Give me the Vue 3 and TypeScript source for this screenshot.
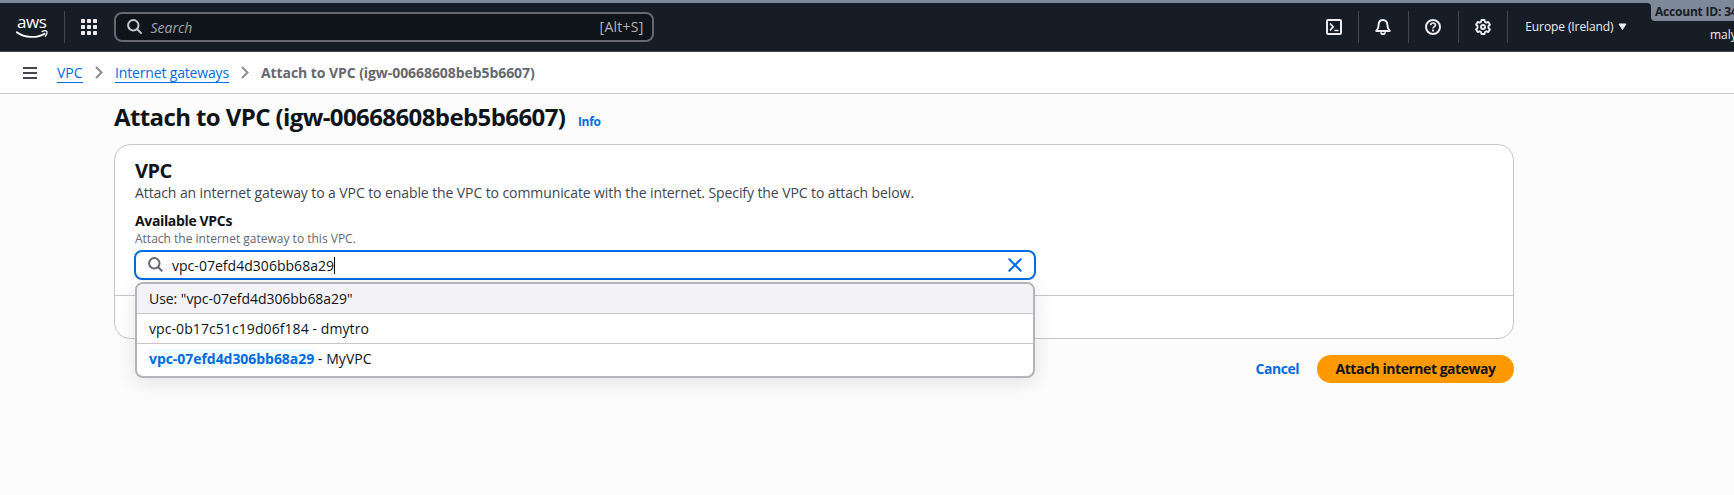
<script setup lang="ts">
import { ref } from 'vue'

interface Option {
  match: string
  rest: string
}

const gatewayId = 'igw-00668608beb5b6607'
const query = ref('vpc-07efd4d306bb68a29')
const options: Option[] = [
  { match: '', rest: 'vpc-0b17c51c19d06f184 - dmytro' },
  { match: 'vpc-07efd4d306bb68a29', rest: ' - MyVPC' },
]
const cells = [0, 6, 12]
</script>

<template>
  <div class="page">
    <div class="strip"></div>
    <header class="topbar">
      <div class="logo">
        <span class="logo-text">aws</span>
        <svg class="swoosh" width="33" height="9" viewBox="0 0 33 9">
          <path d="M.8 2.2C8.500 8 21 8.500 28.600 3.700" fill="none" stroke="#fff" stroke-width="1.800" stroke-linecap="round" />
          <path d="M26 1.600c2-.9 4.300-.9 4.800-.2.500.8-.2 3.100-1.600 4.900" fill="none" stroke="#fff" stroke-width="1.200" stroke-linecap="round" />
        </svg>
      </div>
      <i class="sep"></i>
      <svg class="apps" width="16" height="16" viewBox="0 0 16 16">
        <template v-for="y in cells" :key="y">
          <rect v-for="x in cells" :key="x" :x="x" :y="y" width="4" height="4" rx=".7" fill="#ebebf0" />
        </template>
      </svg>
      <div class="search">
        <svg width="16" height="16" viewBox="0 0 16 16" fill="none" stroke="#c6c6cd" stroke-width="2">
          <circle cx="6.300" cy="6.300" r="5.200" /><path d="m10 10 4.600 4.600" />
        </svg>
        <span class="ph">Search</span>
        <span class="key">[Alt+S]</span>
      </div>
      <nav class="tools">
        <div class="tool">
          <svg width="16" height="16" viewBox="0 0 16 16" fill="none" stroke="#ebebf0" stroke-width="2" stroke-linejoin="round">
            <rect x="1" y="1" width="14" height="14" rx="1" /><path d="m4 4.500 3.200 3.400L4 11.300M8.500 11.500h4" stroke-width="1.700" />
          </svg>
        </div>
        <div class="tool">
          <svg width="16" height="16" viewBox="0 0 16 16" fill="none" stroke="#ebebf0" stroke-width="2" stroke-linejoin="round">
            <path d="M8 1C5.200 1 3.700 3 3.700 5.600c0 3-.8 4.700-2.400 6.400h13.400c-1.600-1.700-2.400-3.400-2.400-6.400C12.300 3 10.800 1 8 1Z" /><path d="M6 13.200a2 2 0 0 0 4 0" />
          </svg>
        </div>
        <div class="tool">
          <svg width="16" height="16" viewBox="0 0 16 16" fill="none" stroke="#ebebf0" stroke-width="2">
            <circle cx="8" cy="8" r="7" /><path d="M5.700 6.300C5.700 4.800 6.700 4 8 4s2.400.8 2.400 2.100C10.400 7.700 8 7.700 8 9.600" stroke-width="1.700" /><path d="M8 10.600v1.800" stroke-width="1.800" />
          </svg>
        </div>
        <div class="tool">
          <svg width="16" height="16" viewBox="0 0 16 16" fill="none" stroke="#ebebf0" stroke-width="1.900" stroke-linejoin="round">
            <path d="M6.500 1h3l.5 2 1.300.7 2-.7 1.600 2.500L13.500 7v2l1.400 1.500-1.600 2.500-2-.7-1.300.7-.5 2h-3L6 13l-1.300-.7-2 .7-1.600-2.500L2.500 9V7L1.100 5.500 2.700 3l2 .7L6 3Z" /><circle cx="8" cy="8" r="2" />
          </svg>
        </div>
      </nav>
      <div class="region">
        <span>Europe (Ireland)</span>
        <svg width="9" height="8" viewBox="0 0 9 8"><path d="M1 1h7L4.500 6.500Z" fill="#ebebf0" stroke="#ebebf0" stroke-linejoin="round" /></svg>
      </div>
      <div class="account">
        <div class="account-id"><svg class="notch" width="4" height="4" viewBox="0 0 4 4"><path d="M0 0h4v4a4 4 0 0 0-4-4Z" fill="#7d8998" /></svg>Account ID: 34</div>
        <div class="user">maly</div>
      </div>
    </header>

    <nav class="crumbs">
      <svg width="14" height="12" viewBox="0 0 14 12"><path d="M0 1h14M0 6h14M0 11h14" stroke="#424650" stroke-width="2" /></svg>
      <a class="crumb-vpc">VPC</a>
      <svg class="chev" width="8" height="13" viewBox="0 0 8 13"><path d="m1 1 5.500 5.500L1 12" fill="none" stroke="#8c8c94" stroke-width="2" /></svg>
      <a class="crumb-gw">Internet gateways</a>
      <svg class="chev" width="8" height="13" viewBox="0 0 8 13"><path d="m1 1 5.500 5.500L1 12" fill="none" stroke="#8c8c94" stroke-width="2" /></svg>
      <span class="current">Attach to VPC ({{ gatewayId }})</span>
    </nav>

    <main>
      <div class="title">
        <h1>Attach to VPC ({{ gatewayId }})</h1>
        <a class="info">Info</a>
      </div>
      <section class="card">
        <div class="body">
          <h2>VPC</h2>
          <p class="desc">Attach an internet gateway to a VPC to enable the VPC to communicate with the internet. Specify the VPC to attach below.</p>
          <div class="label">Available VPCs</div>
          <div class="hint">Attach the internet gateway to this VPC.</div>
          <div class="field">
            <div class="input">
              <svg width="16" height="16" viewBox="0 0 16 16" fill="none" stroke="#656871" stroke-width="2">
                <circle cx="6.300" cy="6.300" r="5.200" /><path d="m10 10 4.300 4.300" />
              </svg>
              <span class="value">{{ query }}</span><i class="caret"></i>
              <svg class="clear" width="14" height="14" viewBox="0 0 14 14"><path d="m1.300 1.300 11.400 11.400m0-11.400L1.300 12.700" stroke="#006ce0" stroke-width="2" stroke-linecap="round" /></svg>
            </div>
            <ul class="menu-list">
              <li class="use">Use: "{{ query }}"</li>
              <li v-for="o in options" :key="o.rest"><mark v-if="o.match">{{ o.match }}</mark><span class="rest">{{ o.rest }}</span></li>
            </ul>
          </div>
        </div>
      </section>
      <div class="actions">
        <button class="cancel">Cancel</button>
        <button class="primary">Attach internet gateway</button>
      </div>
    </main>
  </div>
</template>

<style>
body { background: #fcfcfd; overflow: hidden; }
</style>

<style scoped>
* { box-sizing: border-box; }
.page { height: 495px; overflow: hidden; font: 14px/21px "Open Sans", "Noto Sans", sans-serif; color: #0f141a; white-space: nowrap; background: #fcfcfd; }
svg { display: block; flex: none; }
.strip { height: 3px; background: #7d8998; }
.topbar { height: 49px; background: #161d26; border-bottom: 1px solid #424650; display: flex; align-items: flex-start; color: #ebebf0; }
.logo { width: 48px; height: 34px; margin-left: 16px; padding-top: 10px; }
.logo-text { display: block; height: 17px; font-size: 17px; line-height: 17px; font-weight: 500; letter-spacing: -.4px; color: #fff; padding-left: 1px; }
.sep { flex: none; width: 1px; height: 32px; margin-top: 8px; background: #424650; }
.apps { margin: 16px 17px 0 16px; }
.search { flex: none; width: 540px; height: 30px; margin-top: 9px; border: 2px solid #656871; border-radius: 8px; background: #0f141a; display: flex; align-items: center; padding: 0 8px 0 11px; color: #b4b4bb; }
.search svg { margin-top: -1px; }
.ph { margin-left: 8px; font-style: italic; color: #a4a4ad; padding-top: 1px; }
.key { margin-left: auto; letter-spacing: .25px; padding-bottom: 1px; }
.tools { display: flex; margin: 8px 0 0 656px; }
.tool { width: 49.700px; height: 32px; padding: 8px 0 0 16px; border-right: 1px solid #424650; }
.region { width: 144px; margin-top: 14px; padding-left: 17px; display: flex; align-items: center; gap: 5px; font-size: 12px; line-height: 19px; letter-spacing: -.1px; height: 19px; }
.account { width: 83px; }
.account-id { position: relative; height: 18px; background: #7d8998; border-bottom-left-radius: 4px; padding-left: 4px; font-size: 12px; line-height: 18px; font-weight: 700; letter-spacing: -.2px; color: #161d26; }
.notch { position: absolute; left: -4px; top: 0; }
.user { padding: 5px 0 0 59px; font-size: 12px; line-height: 18px; }
.crumbs { height: 42px; background: #fff; border-bottom: 1px solid #c6c6cd; display: flex; align-items: center; padding-left: 23px; }
.crumbs a { color: #006ce0; border-bottom: 1px solid #006ce0; height: 20px; line-height: 19px; margin-top: 1px; }
.crumbs .crumb-vpc { margin-left: 20px; width: 26px; }
.chev { margin: 0 12px; }
.crumb-gw { width: 114px; letter-spacing: -.16px; }
.current { color: #656871; font-weight: 700; letter-spacing: -.07px; }
main { width: 1400px; margin-left: 114px; padding-top: 6px; }
.title { display: flex; height: 33px; align-items: baseline; }
h1 { margin: 0; font-size: 24px; line-height: 33px; letter-spacing: -.6px; width: 464px; }
.info { color: #006ce0; font-size: 12px; line-height: 17px; font-weight: 700; letter-spacing: -.35px; }
.card { margin-top: 11px; height: 195px; border: 1px solid #c6c6cd; border-radius: 16px; background: #fff; }
.body { height: 151px; border-bottom: 1px solid #c6c6cd; padding: 12px 20px 0; }
h2 { margin: 0; font-size: 20px; line-height: 27px; letter-spacing: -.5px; }
.desc { margin: -2px 0 0; color: #424650; letter-spacing: -.092px; }
.label { margin-top: 7px; font-weight: 700; letter-spacing: -.35px; }
.hint { margin-top: -1px; font-size: 12px; line-height: 17px; color: #656871; }
.field { position: relative; width: 902px; margin: 3px 0 0 -1px; }
.input { height: 30px; border: 2px solid #006ce0; border-radius: 8px; background: #fff; display: flex; align-items: center; padding: 0 12px; }
.input svg { margin-top: -1px; }
.value { margin-left: 8px; letter-spacing: .03px; padding-top: 1px; }
.caret { width: 1px; height: 17px; margin-top: 1px; background: #000; }
.input .clear { margin-left: auto; margin-top: 0; }
.menu-list { position: absolute; z-index: 2; left: 1px; top: 32px; width: 900px; height: 96px; margin: 0; padding: 0; list-style: none; background: #fff; border: 2px solid #b4b4bb; border-radius: 8px; overflow: hidden; box-shadow: 0 4px 20px 1px rgba(0, 7, 22, .1); }
li { height: 30px; padding: 4px 12px 0; border-bottom: 1px solid #c6c6cd; letter-spacing: .08px; }
li:last-child { border: 0; height: 32px; }
.use { background: #f3f3f7; letter-spacing: -.04px; }
mark { color: #006ce0; background: #f0fbff; font-weight: 700; letter-spacing: -.05px; }
.rest { white-space: pre; }
.actions { display: flex; justify-content: flex-end; margin-top: 16px; gap: 18px; }
button { height: 28px; border: 0; padding: 0 0 1px; font: 700 14px/21px "Open Sans", "Noto Sans", sans-serif; letter-spacing: -.47px; color: #0f141a; background: none; }
.cancel { color: #006ce0; }
.primary { width: 197px; border-radius: 14px; background: #ff9900; }
</style>
